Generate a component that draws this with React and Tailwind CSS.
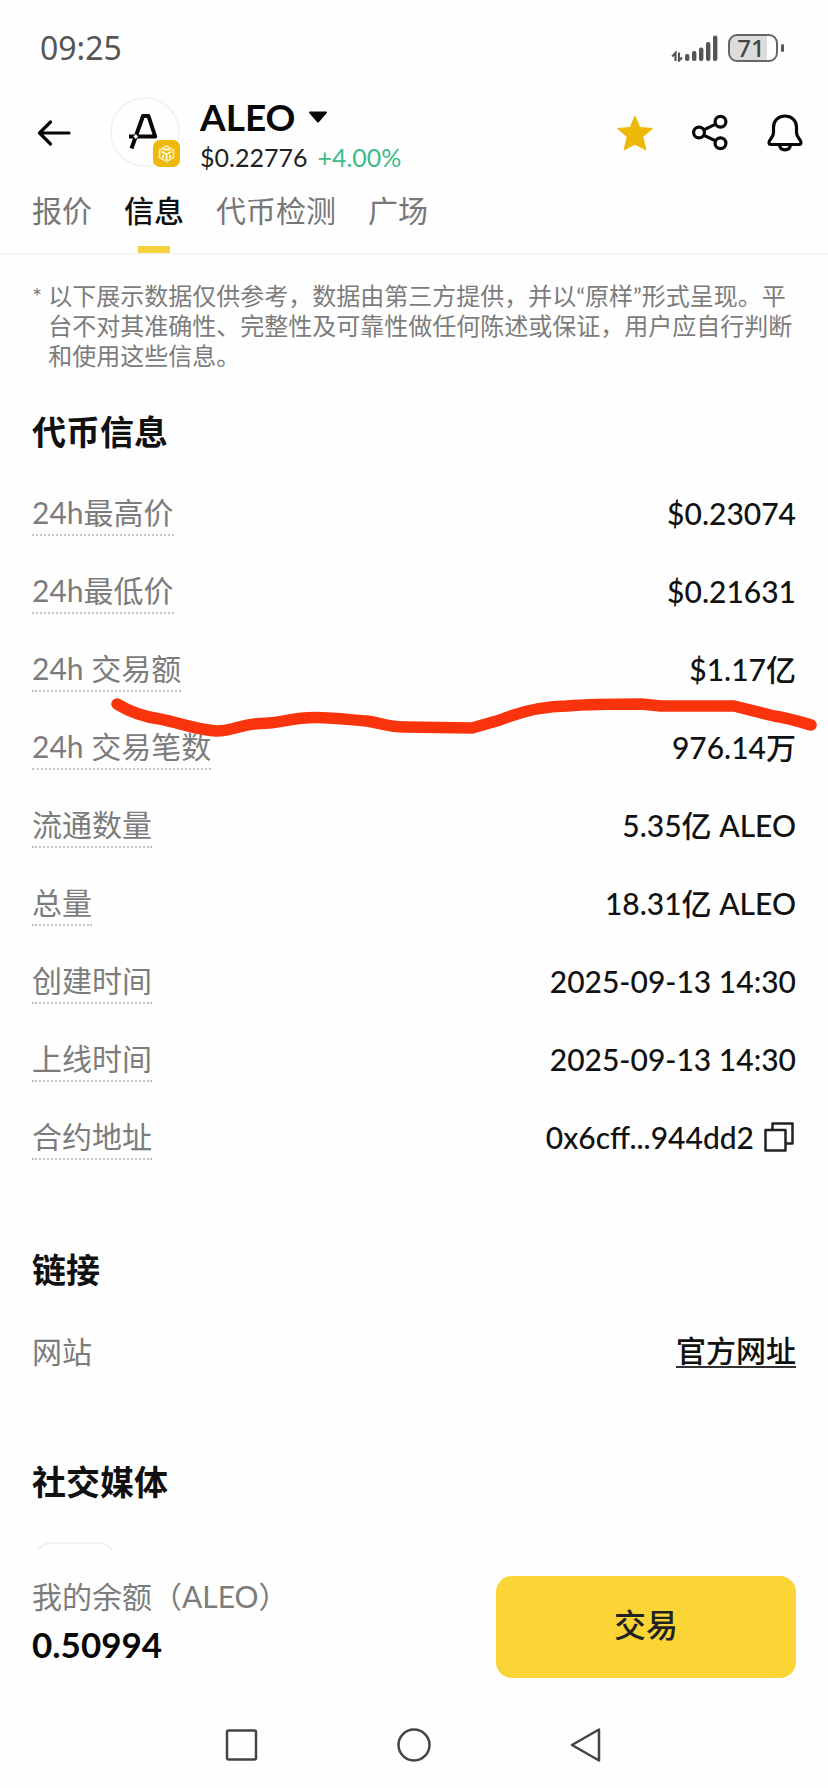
const stats = [
  ["24h最高价", "$0.23074"],
  ["24h最低价", "$0.21631"],
  ["24h 交易额", "$1.17亿"],
  ["24h 交易笔数", "976.14万"],
  ["流通数量", "5.35亿 ALEO"],
  ["总量", "18.31亿 ALEO"],
  ["创建时间", "2025-09-13 14:30"],
  ["上线时间", "2025-09-13 14:30"],
  ["合约地址", "0x6cff...944dd2"],
];

const tabs = ["报价", "信息", "代币检测", "广场"];

function StatusBar() {
  return (
    <div className="flex h-24 items-center justify-between pr-11 pl-10">
      <span className="font-['Noto_Sans'] text-[32px] leading-10 text-[#555]">09:25</span>
      <div className="flex items-center gap-[9px]">
        <svg className="h-[28px] w-[48px]" viewBox="0 0 48 28" fill="#555" aria-hidden="true">
          <path d="M4.500 27V19L1.200 22.500M8 18.500V26.500L11 23.500" stroke="#555" strokeWidth="2.200" fill="none" />
          <rect x="14" y="20" width="4.400" height="7" rx="2" />
          <rect x="21" y="17" width="4.400" height="10" rx="2" />
          <rect x="28" y="13.500" width="4.400" height="13.500" rx="2" />
          <rect x="35" y="8" width="4.400" height="19" rx="2" />
          <rect x="42" y="1.500" width="4.400" height="25.500" rx="2" />
        </svg>
        <div className="flex items-center gap-[3px]">
          <div className="flex h-7 w-[50px] items-center justify-center rounded-[9px] border-2 border-[#666] bg-linear-to-r from-[#dcdcdc] from-80% to-white to-80% pr-1 font-['Noto_Sans'] text-[24px] leading-6 font-medium text-[#444]">
            71
          </div>
          <div className="h-2 w-[3px] rounded-sm bg-[#555]" />
        </div>
      </div>
    </div>
  );
}

function TokenLogo() {
  return (
    <svg className="size-[70px]" viewBox="0 0 70 70" role="img" aria-label="ALEO">
      <circle cx="35" cy="34" r="34" fill="#fefefe" stroke="#f1f1f1" strokeWidth="1.500" />
      <path d="M19 38.500H45.200L38.500 18H33L21.500 50.500" fill="none" stroke="#080808" strokeWidth="4" strokeLinejoin="round" />
      <path d="M25.700 36L28 38.500L25.700 41L23.400 38.500Z" fill="#fff" />
      <rect x="43" y="42" width="27" height="27" rx="7" fill="#edb90c" />
      <path d="M56.500 48L63.500 52V59.500L56.500 63.500L49.500 59.500V52Z" fill="none" stroke="#fbe9a8" strokeWidth="1.800" />
      <path d="M51.500 53.500L56.500 56.500L61.500 53.500M56.500 56.500V62M53 51.500H60M53 57V60M60 57V60" fill="none" stroke="#fffbe9" strokeWidth="1.800" />
    </svg>
  );
}

function Header() {
  return (
    <header className="flex h-[74px] items-center pr-6 pl-9">
      <button type="button" aria-label="返回" className="mr-[38px]">
        <svg className="size-9" viewBox="0 0 36 36" fill="none" stroke="#080808" strokeWidth="3.200" strokeLinecap="round" strokeLinejoin="round">
          <path d="M33 18H4M14.500 7L3.500 18L14.500 29" />
        </svg>
      </button>
      <TokenLogo />
      <div className="ml-5 flex flex-col pt-2">
        <button type="button" className="flex items-center gap-3 text-[37px] leading-10 font-bold text-[#080808]">
          ALEO
          <svg className="h-3 w-5" viewBox="0 0 20 12" aria-hidden="true">
            <path d="M1.500 .5H18.500Q19.500 1 18.800 2L11 11Q10 12 9 11L1.200 2Q.5 1 1.500 .5Z" fill="#080808" />
          </svg>
        </button>
        <p className="flex gap-[10px] text-[25px] leading-10 text-[#222]">
          $0.22776 <span className="text-[#3dba88]">+4.00%</span>
        </p>
      </div>
      <div className="ml-auto flex items-center gap-[37px]">
        <button type="button" aria-label="收藏">
          <svg className="size-[38px]" viewBox="0 0 38 38">
            <path d="M19 2L23.800 13.500L36.500 14.500L26.800 22.700L30 36L19 30.200L8 36L11.200 22.700L1.500 14.500L14.200 13.500Z" fill="#efb90b" stroke="#efb90b" strokeWidth="1" strokeLinejoin="round" />
          </svg>
        </button>
        <button type="button" aria-label="分享">
          <svg className="size-[38px]" viewBox="0 0 38 38" fill="none" stroke="#080808" strokeWidth="3.200">
            <circle cx="8" cy="18.500" r="5.400" />
            <circle cx="29.500" cy="7.700" r="5.400" />
            <circle cx="29.500" cy="29.300" r="5.400" />
            <path d="M12.800 15.900L24.700 10.100M12.800 21.300L24.700 26.900" />
          </svg>
        </button>
        <button type="button" aria-label="提醒">
          <svg className="size-[38px]" viewBox="0 0 38 38" fill="none" stroke="#080808" strokeWidth="3.200" strokeLinejoin="round">
            <path d="M19 2C12.500 2 7.500 6.500 7.500 13V18.500C7.500 24 3 25 3 28.500Q3 30.500 5 30.500H33Q35 30.500 35 28.500C35 25 30.500 24 30.500 18.500V13C30.500 6.500 25.500 2 19 2Z" />
            <path d="M13.500 31C14.500 37.500 23.500 37.500 24.500 31" />
          </svg>
        </button>
      </div>
    </header>
  );
}

function Tabs() {
  return (
    <nav className="flex gap-8 border-b-2 border-[#f4f4f4] px-8 pt-5 text-[30px] leading-10 text-[#777]">
      {tabs.map((tab) =>
        tab === "信息" ? (
          <button key={tab} type="button" aria-current="page" className="flex flex-col items-center font-medium text-[#111]">
            {tab}
            <span className="mt-4 h-[7px] w-8 bg-[#f3d23c]" />
          </button>
        ) : (
          <button key={tab} type="button" className="self-start">
            {tab}
          </button>
        ),
      )}
    </nav>
  );
}

function SectionTitle({ children }) {
  return <h2 className="text-[34px] leading-10 font-bold text-[#111]">{children}</h2>;
}

function RedMark() {
  return (
    <svg
      className="pointer-events-none absolute -right-8 -left-8 top-[218px] h-[48px] w-auto"
      viewBox="0 692 828 48"
      preserveAspectRatio="none"
      fill="none"
      stroke="#f9330b"
      strokeWidth="11.500"
      strokeLinecap="round"
      strokeLinejoin="round"
      aria-hidden="true"
    >
      <path d="M117 704C130 712 145 717 160 719C180 723 198 730 217 731C234 731 240 724 260 723.500C283 723 290 717.500 315 717.500C340 718 350 720 367 721C380 723 390 727 404 727L472 728L500 720C525 710 545 706 567 706C590 704 615 704 641 704L661 706H734L774 716C788 718 801 722 811 725" />
    </svg>
  );
}

export default function App() {
  return (
    <div className="flex min-h-screen flex-col bg-[#fefefe] font-[Lato,'Noto_Sans_CJK_SC',sans-serif]">
      <StatusBar />
      <Header />
      <Tabs />
      <main className="grow px-8">
        <p className="mt-[26px] flex gap-[6px] text-[24px] leading-[30px] text-[#7c7c7c]">
          <span>*</span>
          <span>
            以下展示数据仅供参考，数据由第三方提供，并以“原样”形式呈现。平台不对其准确性、完整性及可靠性做任何陈述或保证，用户应自行判断和使用这些信息。
          </span>
        </p>

        <section className="mt-[41px]">
          <SectionTitle>代币信息</SectionTitle>
          <dl className="relative mt-[22px]">
            {stats.map(([label, value]) => (
              <div key={label} className="flex h-[78px] items-center justify-between">
                <dt className="border-b-2 border-dotted border-[#c4c4c4] pt-[6px] pb-[6px] text-[30px] leading-8 text-[#7c7c7c]">
                  {label}
                </dt>
                <dd className="flex items-center gap-[10px] text-[30px] leading-8 font-medium text-[#111]">
                  {value}
                  {label === "合约地址" && (
                    <button type="button" aria-label="复制" className="mr-[2px]">
                      <svg className="size-[30px]" viewBox="0 0 30 30" fill="none" stroke="#222" strokeWidth="2.500" strokeLinejoin="round">
                        <rect x="1.500" y="8" width="20" height="20.500" />
                        <path d="M8.500 7.500V1.500H28.500V21.500H22" />
                      </svg>
                    </button>
                  )}
                </dd>
              </div>
            ))}
            <RedMark />
          </dl>
        </section>

        <section className="mt-[74px]">
          <SectionTitle>链接</SectionTitle>
          <div className="mt-[22px] flex h-[78px] items-center justify-between text-[30px] leading-8">
            <span className="text-[#7c7c7c]">网站</span>
            <a href="#" className="border-b-2 border-[#333] font-medium text-[#111]">
              官方网址
            </a>
          </div>
        </section>

        <section className="mt-[72px]">
          <SectionTitle>社交媒体</SectionTitle>
          <div className="mt-10 h-2 overflow-hidden px-1">
            <div className="h-16 w-[78px] rounded-[14px] border-2 border-[#f1f1f1]" />
          </div>
        </section>
      </main>

      <footer>
        <div className="flex items-start justify-between px-8">
          <div>
            <p className="text-[30px] leading-10 text-[#7c7c7c]">我的余额（ALEO）</p>
            <p className="mt-2 text-[35px] leading-10 font-bold text-[#080808]">0.50994</p>
          </div>
          <button type="button" className="h-[102px] w-[300px] rounded-2xl bg-[#fbd535] pb-1 text-[32px] font-medium text-[#222]">
            交易
          </button>
        </div>
        <nav className="mt-[50px] mb-[26px] flex justify-center gap-[138px]">
          <button type="button" aria-label="最近任务">
            <svg className="size-[34px]" viewBox="0 0 34 34" fill="none" stroke="#444" strokeWidth="2.500">
              <rect x="2" y="2.500" width="29" height="29" rx="1.500" />
            </svg>
          </button>
          <button type="button" aria-label="主屏幕">
            <svg className="size-[34px]" viewBox="0 0 34 34" fill="none" stroke="#444" strokeWidth="2.500">
              <circle cx="17" cy="17" r="15.500" />
            </svg>
          </button>
          <button type="button" aria-label="返回上一页">
            <svg className="size-[34px]" viewBox="0 0 34 34" fill="none" stroke="#444" strokeWidth="2.500" strokeLinejoin="round">
              <path d="M30 1.500V32.500L3 17Z" />
            </svg>
          </button>
        </nav>
      </footer>
    </div>
  );
}
